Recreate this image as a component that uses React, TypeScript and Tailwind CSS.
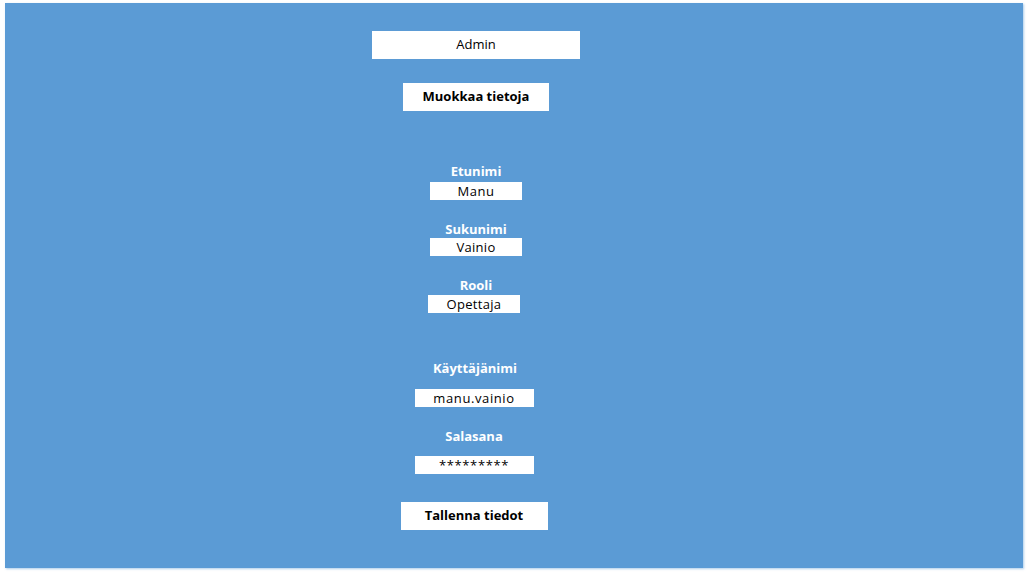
import React from "react";

const font = { fontFamily: '"Open Sans", "Liberation Sans", sans-serif' };

function Label({ text, className }: { text: string; className?: string }) {
  return (
    <div className={`text-[13px] font-bold leading-[16px] text-white ${className ?? ""}`}>{text}</div>
  );
}

function Field({ text, className }: { text: string; className?: string }) {
  return (
    <div
      className={`flex h-[18px] items-center justify-center bg-white text-[13px] leading-[18px] text-black ${className ?? ""}`}
    >
      {text}
    </div>
  );
}

export default function App() {
  return (
    <div className="h-[576px] w-[1029px] bg-white pl-[5px] pt-[3px]" style={font}>
      <div className="flex h-[565px] w-[1018px] bg-[#5b9bd5] shadow-[1px_1px_2px_rgba(91,155,213,0.5)]">
        <div className="ml-[367px] flex w-[208px] flex-col items-center">
          <div className="mt-[28px] flex h-[28px] w-[208px] items-center justify-center bg-white text-[13px] text-black">
            Admin
          </div>
          <div className="mt-[24px] flex h-[28px] w-[146px] items-center justify-center bg-white text-[13px] font-bold text-black">
            Muokkaa tietoja
          </div>

          <Label text="Etunimi" className="mt-[52px]" />
          <Field text="Manu" className="mt-[3px] w-[92px] tracking-[0.5px]" />

          <Label text="Sukunimi" className="mt-[21px]" />
          <Field text="Vainio" className="mt-[1px] w-[92px] tracking-[0.3px]" />

          <Label text="Rooli" className="mt-[21px]" />
          <Field text="Opettaja" className="mt-[2px] w-[92px] -translate-x-[2px] tracking-[0.3px]" />

          <Label text="Käyttäjänimi" className="mt-[47px] -translate-x-[1px]" />
          <Field text="manu.vainio" className="mt-[13px] w-[119px] -translate-x-[2px] tracking-[0.6px]" />

          <Label text="Salasana" className="mt-[21px] -translate-x-[2px]" />
          <Field text="*********" className="mt-[12px] w-[119px] -translate-x-[2px] tracking-[0.6px]" />

          <div className="mt-[28px] flex h-[28px] w-[147px] -translate-x-[2px] items-center justify-center bg-white text-[13px] font-bold text-black">
            Tallenna tiedot
          </div>
        </div>
      </div>
    </div>
  );
}
